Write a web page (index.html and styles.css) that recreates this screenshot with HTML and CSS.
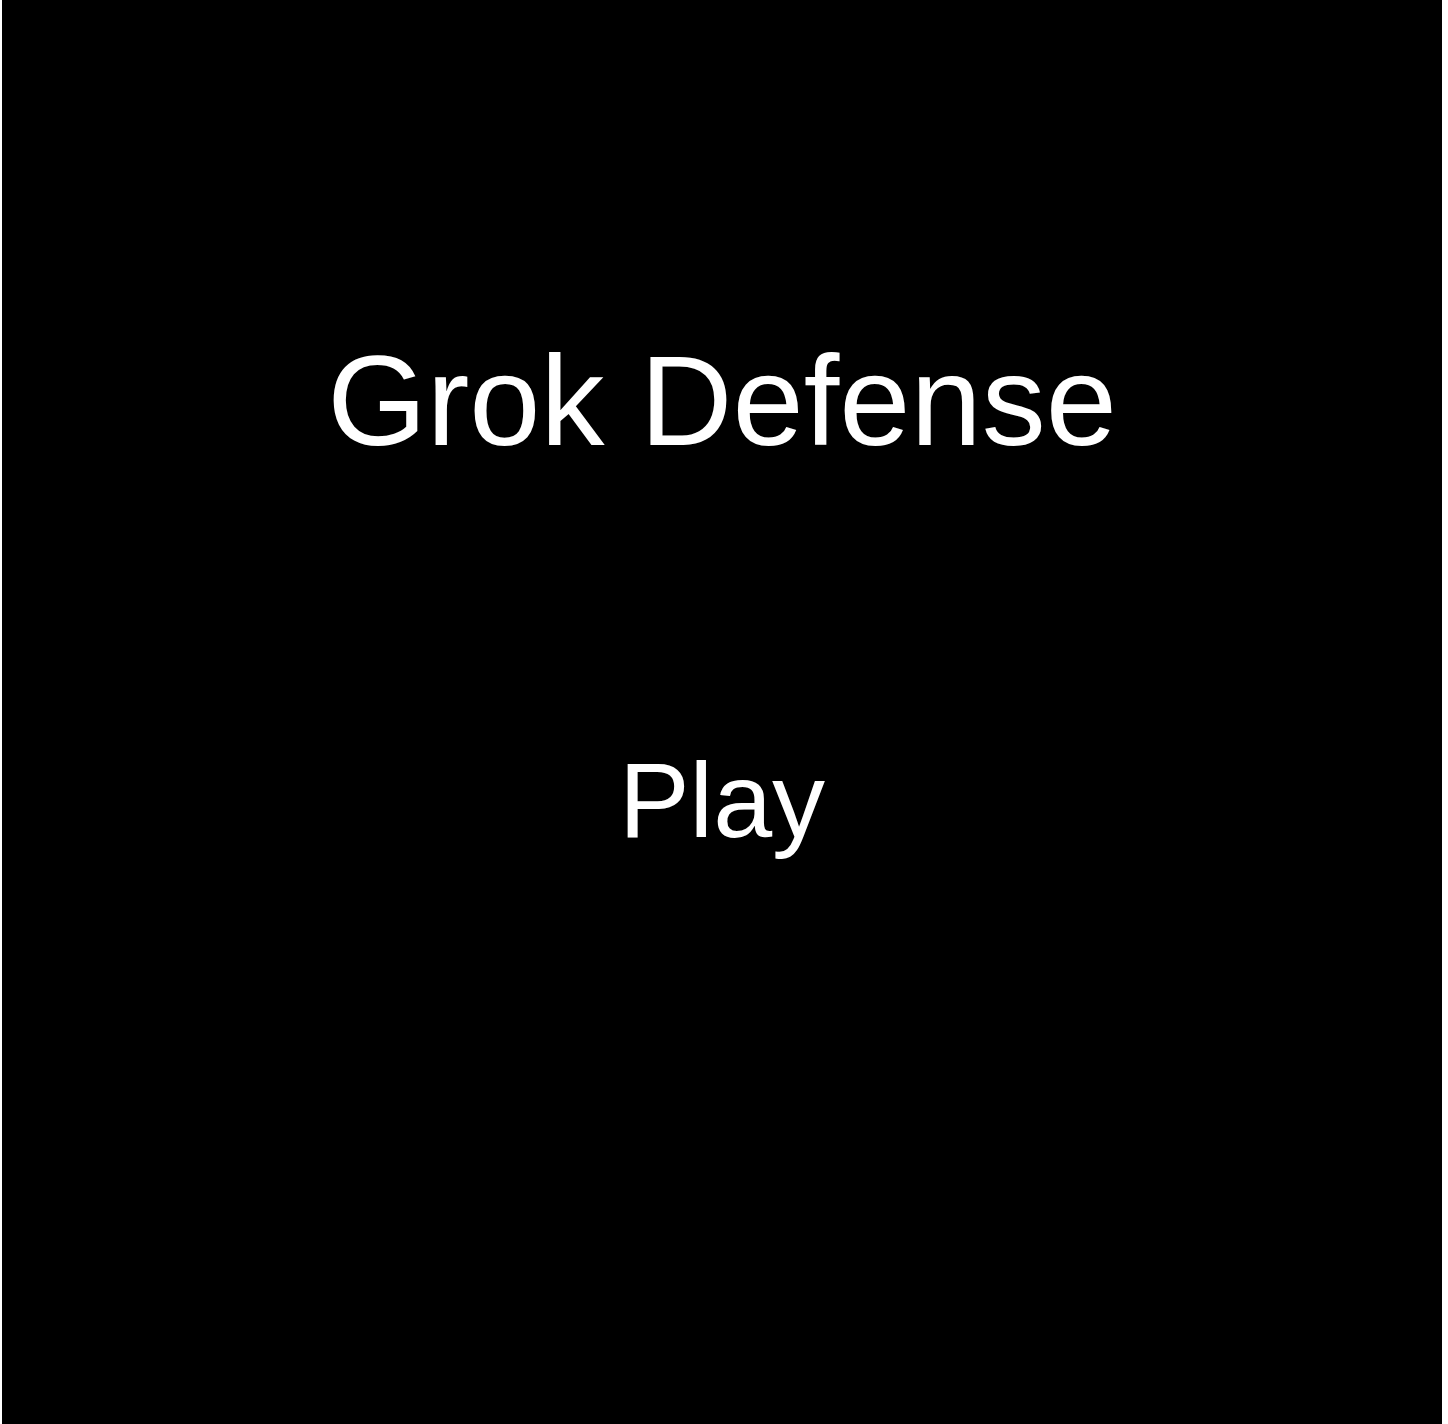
FILE: index.html
```html
<!DOCTYPE html>
<html>
<head>
<meta charset="utf-8">
<title>Grok Defense</title>
<link rel="stylesheet" href="styles.css">
</head>
<body>
<div class="stage">
  <h1 class="title">Grok Defense</h1>
  <div class="play">Play</div>
</div>
</body>
</html>
```
FILE: styles.css
```css
html, body {
  margin: 0;
  padding: 0;
  background: #ffffff;
}
.stage {
  margin-left: 2px;
  width: 1440px;
  height: 1424px;
  background: #000000;
  color: #ffffff;
  font-family: "Liberation Sans", Arial, Helvetica, sans-serif;
  display: flex;
  flex-direction: column;
  align-items: center;
  padding-top: 337px;
  box-sizing: border-box;
}
.title {
  margin: 0;
  font-weight: normal;
  font-size: 128px;
  line-height: 1;
}
.play {
  margin-top: 282px;
  font-size: 106px;
  line-height: 1;
  cursor: pointer;
}
```
